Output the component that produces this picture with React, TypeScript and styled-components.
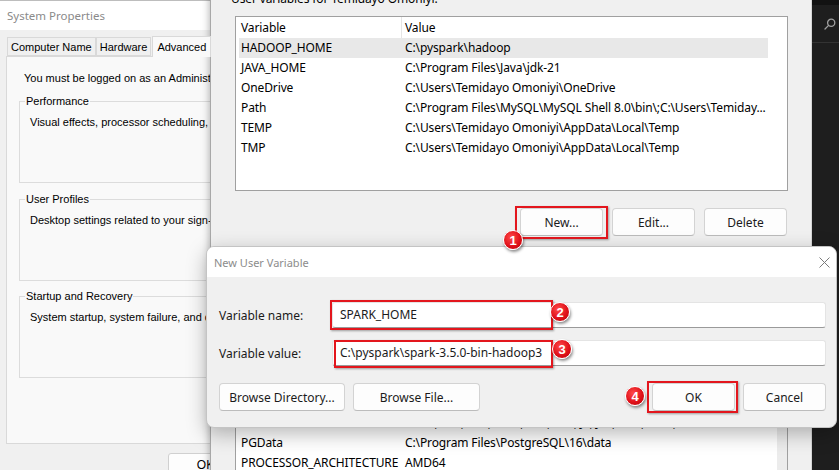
import React from 'react';
import styled, { createGlobalStyle } from 'styled-components';

const UI_FONT = `"Noto Sans", "Open Sans", sans-serif`;
const CLASSIC_FONT = `"Liberation Sans", Arial, sans-serif`;

const Global = createGlobalStyle`
  html, body { margin: 0; padding: 0; background: #1e1e1e; }
  * { box-sizing: border-box; }
`;

const Desktop = styled.div`
  position: relative;
  width: 839px;
  height: 470px;
  overflow: hidden;
  background: #1e1e1e;
`;

/* System Properties (behind) */
const S = {
  Window: styled.section`
    position: absolute;
    left: 0;
    top: 0;
    width: 400px;
    height: 470px;
    background: #f0f0f0;
    border-top: 1px solid #bdbdbd;
    font-family: ${CLASSIC_FONT};
    font-size: 11px;
    color: #000;
  `,
  TitleBar: styled.div`
    height: 29px;
    background: #fff;
    display: flex;
    align-items: center;
    padding-left: 7px;
  `,
  Title: styled.span`
    font-family: ${UI_FONT};
    font-size: 11.5px;
    color: #8a8a8a;
  `,
  Tabs: styled.div`
    display: flex;
    align-items: flex-end;
    height: 19px;
    margin: 7px 0 0 7px;
  `,
  Tab: styled.div<{ $active?: boolean }>`
    height: ${(p) => (p.$active ? 21 : 19)}px;
    margin-bottom: ${(p) => (p.$active ? -1 : 0)}px;
    padding: 0 ${(p) => (p.$active ? 4 : 3)}px;
    display: flex;
    align-items: center;
    background: ${(p) => (p.$active ? '#f9f9f9' : '#f0f0f0')};
    border: 1px solid #d9d9d9;
    border-bottom: ${(p) => (p.$active ? 'none' : '1px solid #d9d9d9')};
    margin-right: ${(p) => (p.$active ? 2 : 0)}px;
    margin-left: ${(p) => (p.$active ? 1 : 0)}px;
    position: relative;
    z-index: ${(p) => (p.$active ? 1 : 0)};
  `,
  Panel: styled.div`
    margin-left: 6px;
    width: 400px;
    height: 388px;
    background: #f9f9f9;
    border: 1px solid #d9d9d9;
    padding: 14px 0 0 12px;
  `,
  Note: styled.div`
    line-height: 14px;
    padding-left: 5px;
    white-space: nowrap;
  `,
  Group: styled.fieldset<{ $gap: number }>`
    margin: ${(p) => p.$gap}px 0 0 0;
    width: 380px;
    height: 89px;
    padding: 7px 0 0 10px;
    border: 1px solid #dcdcdc;
    min-width: 0;
  `,
  Legend: styled.legend`
    padding: 0 1px;
    margin-left: -5px;
    line-height: 14px;
  `,
  GroupText: styled.div`
    line-height: 14px;
    white-space: nowrap;
  `,
  Button: styled.div`
    margin: 9px 0 0 168px;
    width: 75px;
    height: 23px;
    background: #fdfdfd;
    border: 1px solid #d0d0d0;
    border-radius: 3px;
    display: flex;
    align-items: center;
    justify-content: center;
    font-size: 12px;
  `,
};

/* Environment Variables (middle) */
const E = {
  Window: styled.section`
    position: absolute;
    left: 210px;
    top: -20px;
    width: 602px;
    height: 500px;
    background: #f0f0f0;
    border-left: 1px solid #a8a8a8;
    border-right: 1px solid #d6d6d6;
    box-shadow: 0 0 8px rgba(0, 0, 0, 0.35);
    padding: 11px 0 0 24px;
    font-family: ${UI_FONT};
    font-size: 12px;
    letter-spacing: -0.12px;
    color: #000;
  `,
  Label: styled.div<{ $top: number }>`
    line-height: 16px;
    margin: ${(p) => p.$top}px 0 0 -4px;
  `,
  List: styled.div<{ $height: number; $scroll?: boolean }>`
    position: relative;
    margin-top: ${(p) => (p.$scroll ? 8 : 9)}px;
    width: 553px;
    height: ${(p) => p.$height}px;
    background: #fff;
    border: 1px solid #a0a0a0;
    padding: 0 19px 0 3px;
    overflow: hidden;
    &::after {
      content: '';
      display: ${(p) => (p.$scroll ? 'block' : 'none')};
      position: absolute;
      right: 0;
      top: 0;
      bottom: 0;
      width: 10px;
      background: #ececec;
    }
  `,
  Header: styled.div`
    display: grid;
    grid-template-columns: 162px 1fr;
    height: 21px;
    align-items: center;
  `,
  Row: styled.div<{ $selected?: boolean }>`
    display: grid;
    grid-template-columns: 162px 1fr;
    height: 20px;
    line-height: 20px;
    background: ${(p) => (p.$selected ? '#e8e8e8' : 'transparent')};
  `,
  Cell: styled.div<{ $divider?: boolean }>`
    padding-left: ${(p) => (p.$divider ? 3 : 2)}px;
    border-left: ${(p) => (p.$divider ? '1px solid #e5e5e5' : 'none')};
    white-space: nowrap;
    overflow: hidden;
    height: 100%;
    display: flex;
    align-items: center;
  `,
  ValueCell: styled.div`
    padding-left: 4px;
    white-space: nowrap;
    overflow: hidden;
  `,
  Buttons: styled.div`
    margin-top: 17px;
    width: 553px;
    padding-right: 1px;
    display: flex;
    justify-content: flex-end;
    gap: 9px;
  `,
};

const Button = styled.div<{ $width: number }>`
  width: ${(p) => p.$width}px;
  height: 28px;
  background: #fdfdfd;
  border: 1px solid #d3d3d3;
  border-bottom-color: #bcbcbc;
  border-radius: 4px;
  display: flex;
  align-items: center;
  justify-content: center;
  font-family: ${UI_FONT};
  font-size: 12px;
  letter-spacing: 0;
  color: #1b1b1b;
`;

const Highlight = styled.div<{ $t: number; $r: number; $b: number; $l: number }>`
  position: relative;
  &::after {
    content: '';
    position: absolute;
    top: -${(p) => p.$t}px;
    right: -${(p) => p.$r}px;
    bottom: -${(p) => p.$b}px;
    left: -${(p) => p.$l}px;
    border: 2px solid #e3161d;
    box-shadow: 1px 1px 2px rgba(0, 0, 0, 0.35);
    pointer-events: none;
  }
`;

/* New User Variable dialog (front) */
const D = {
  Window: styled.section`
    position: absolute;
    left: 206px;
    top: 246px;
    width: 631px;
    height: 182px;
    border: 1px solid #c4c4c4;
    border-radius: 8px;
    overflow: hidden;
    background: #f0f0f0;
    box-shadow: 0 6px 20px rgba(0, 0, 0, 0.28);
    font-family: ${UI_FONT};
    font-size: 12px;
    color: #000;
  `,
  TitleBar: styled.div`
    height: 30px;
    background: #fff;
    display: flex;
    align-items: center;
    justify-content: space-between;
    padding: 0 6px 0 7px;
  `,
  Title: styled.span`
    color: #8c8c8c;
    font-size: 11px;
  `,
  Body: styled.div`
    padding: 25px 10px 0 12px;
  `,
  Field: styled.div<{ $gap: number }>`
    display: flex;
    align-items: center;
    height: 26px;
    margin-top: ${(p) => p.$gap}px;
  `,
  FieldLabel: styled.div`
    width: 113px;
    color: #1b1b1b;
  `,
  Input: styled.div`
    position: relative;
    flex: 1;
    height: 26px;
    background: #fff;
    border: 1px solid #e4e4e4;
    border-bottom-color: #9a9a9a;
    border-radius: 3px;
    padding-left: 7px;
    line-height: 24px;
    color: #1b1b1b;
  `,
  Mark: styled.div<{ $left: number; $top: number; $w: number; $h: number }>`
    position: absolute;
    left: ${(p) => p.$left}px;
    top: ${(p) => p.$top}px;
    width: ${(p) => p.$w}px;
    height: ${(p) => p.$h}px;
    border: 2px solid #e3161d;
    box-shadow: 1px 1px 2px rgba(0, 0, 0, 0.35);
  `,
  Actions: styled.div`
    margin-top: 17px;
    display: flex;
    justify-content: space-between;
  `,
  Group: styled.div`
    display: flex;
    gap: 8px;
  `,
};

const Badge = styled.div<{ $x: number; $y: number }>`
  position: absolute;
  left: ${(p) => p.$x - 10}px;
  top: ${(p) => p.$y - 10}px;
  width: 20px;
  height: 20px;
  border-radius: 50%;
  background: radial-gradient(circle at 40% 35%, #ff4a4a 0%, #e0121a 55%, #b80008 100%);
  border: 1px solid #fff;
  box-shadow: 1px 2px 3px rgba(0, 0, 0, 0.45);
  color: #fff;
  font-family: ${CLASSIC_FONT};
  font-weight: 700;
  font-size: 13px;
  display: flex;
  align-items: center;
  justify-content: center;
`;

const Dark = {
  Pane: styled.aside`
    position: absolute;
    left: 812px;
    top: 0;
    width: 27px;
    height: 470px;
    background: #1e1e1e;
  `,
  Strip: styled.div`
    height: 5px;
    background: #121212;
  `,
  Search: styled.div`
    height: 38px;
    border-bottom: 1px solid #333;
    display: flex;
    align-items: center;
    padding-left: 12px;
  `,
};

const userVars = [
  ['HADOOP_HOME', 'C:\\pyspark\\hadoop'],
  ['JAVA_HOME', 'C:\\Program Files\\Java\\jdk-21'],
  ['OneDrive', 'C:\\Users\\Temidayo Omoniyi\\OneDrive'],
  ['Path', 'C:\\Program Files\\MySQL\\MySQL Shell 8.0\\bin\\;C:\\Users\\Temiday...'],
  ['TEMP', 'C:\\Users\\Temidayo Omoniyi\\AppData\\Local\\Temp'],
  ['TMP', 'C:\\Users\\Temidayo Omoniyi\\AppData\\Local\\Temp'],
];

const systemVars = [
  ['ComSpec', 'C:\\WINDOWS\\system32\\cmd.exe'],
  ['DriverData', 'C:\\Windows\\System32\\Drivers\\DriverData'],
  ['JAVA_HOME', 'C:\\Program Files\\Java\\jdk-21'],
  ['NUMBER_OF_PROCESSORS', '8'],
  ['OS', 'Windows_NT'],
  ['Path', 'C:\\Program Files\\Common Files\\Oracle\\Java\\javapath;...'],
  ['PATHEXT', '.COM;.EXE;.BAT;.CMD;.VBS;.VBE;.JS;.JSE;.WSF;.WSH;.MSC'],
  ['PGData', 'C:\\Program Files\\PostgreSQL\\16\\data'],
  ['PROCESSOR_ARCHITECTURE', 'AMD64'],
  ['PROCESSOR_IDENTIFIER', 'Intel64 Family 6 Model 140 Stepping 1'],
];

const SearchIcon = () => (
  <svg width="12" height="12" viewBox="0 0 12 12" fill="none" stroke="#a0a0a0" strokeWidth="1.3">
    <circle cx="7.2" cy="4.8" r="3.6" />
    <path d="M4.6 7.4 L1 11" strokeLinecap="round" />
  </svg>
);

const CloseIcon = () => (
  <svg width="11" height="11" viewBox="0 0 11 11" stroke="#7a7a7a" strokeWidth="1">
    <path d="M0.5 0.5 L10.5 10.5 M10.5 0.5 L0.5 10.5" />
  </svg>
);

const App: React.FC = () => {
  return (
    <Desktop>
      <Global />

      <S.Window>
        <S.TitleBar>
          <S.Title>System Properties</S.Title>
        </S.TitleBar>
        <S.Tabs>
          <S.Tab>Computer Name</S.Tab>
          <S.Tab>Hardware</S.Tab>
          <S.Tab $active>Advanced</S.Tab>
          <S.Tab>System Protection</S.Tab>
        </S.Tabs>
        <S.Panel>
          <S.Note>You must be logged on as an Administrator to make most of these changes.</S.Note>
          <S.Group $gap={9}>
            <S.Legend>Performance</S.Legend>
            <S.GroupText>Visual effects, processor scheduling, memory usage, and virtual memory</S.GroupText>
          </S.Group>
          <S.Group $gap={9}>
            <S.Legend>User Profiles</S.Legend>
            <S.GroupText>Desktop settings related to your sign-in</S.GroupText>
          </S.Group>
          <S.Group $gap={8}>
            <S.Legend>Startup and Recovery</S.Legend>
            <S.GroupText>System startup, system failure, and debugging information</S.GroupText>
          </S.Group>
        </S.Panel>
        <S.Button>OK</S.Button>
      </S.Window>

      <E.Window>
        <E.Label $top={0}>User variables for Temidayo Omoniyi:</E.Label>
        <E.List $height={175}>
          <E.Header>
            <E.Cell>Variable</E.Cell>
            <E.Cell $divider>Value</E.Cell>
          </E.Header>
          {userVars.map(([name, value], i) => (
            <E.Row key={name} $selected={i === 0}>
              <E.Cell>{name}</E.Cell>
              <E.ValueCell>{value}</E.ValueCell>
            </E.Row>
          ))}
        </E.List>
        <E.Buttons>
          <Highlight $t={2} $r={5} $b={3} $l={5}>
            <Button $width={83}>New...</Button>
          </Highlight>
          <Button $width={83}>Edit...</Button>
          <Button $width={83}>Delete</Button>
        </E.Buttons>
        <E.Label $top={11}>System variables</E.Label>
        <E.List $height={210} $scroll>
          <E.Header>
            <E.Cell>Variable</E.Cell>
            <E.Cell $divider>Value</E.Cell>
          </E.Header>
          {systemVars.map(([name, value]) => (
            <E.Row key={name}>
              <E.Cell>{name}</E.Cell>
              <E.ValueCell>{value}</E.ValueCell>
            </E.Row>
          ))}
        </E.List>
      </E.Window>

      <Dark.Pane>
        <Dark.Strip />
        <Dark.Search>
          <SearchIcon />
        </Dark.Search>
      </Dark.Pane>

      <D.Window>
        <D.TitleBar>
          <D.Title>New User Variable</D.Title>
          <CloseIcon />
        </D.TitleBar>
        <D.Body>
          <D.Field $gap={0}>
            <D.FieldLabel>Variable name:</D.FieldLabel>
            <D.Input>
              SPARK_HOME
              <D.Mark $left={-3} $top={-3} $w={223} $h={30} />
            </D.Input>
          </D.Field>
          <D.Field $gap={12}>
            <D.FieldLabel>Variable value:</D.FieldLabel>
            <D.Input>
              C:\pyspark\spark-3.5.0-bin-hadoop3
              <D.Mark $left={1} $top={-1} $w={219} $h={28} />
            </D.Input>
          </D.Field>
          <D.Actions>
            <D.Group>
              <Button $width={126}>Browse Directory...</Button>
              <Button $width={127}>Browse File...</Button>
            </D.Group>
            <D.Group>
              <Highlight $t={2} $r={3} $b={2} $l={5}>
                <Button $width={83}>OK</Button>
              </Highlight>
              <Button $width={83}>Cancel</Button>
            </D.Group>
          </D.Actions>
        </D.Body>
      </D.Window>

      <Badge $x={513} $y={240}>1</Badge>
      <Badge $x={560} $y={312}>2</Badge>
      <Badge $x={562} $y={349}>3</Badge>
      <Badge $x={635} $y={396}>4</Badge>
    </Desktop>
  );
};

export default App;
